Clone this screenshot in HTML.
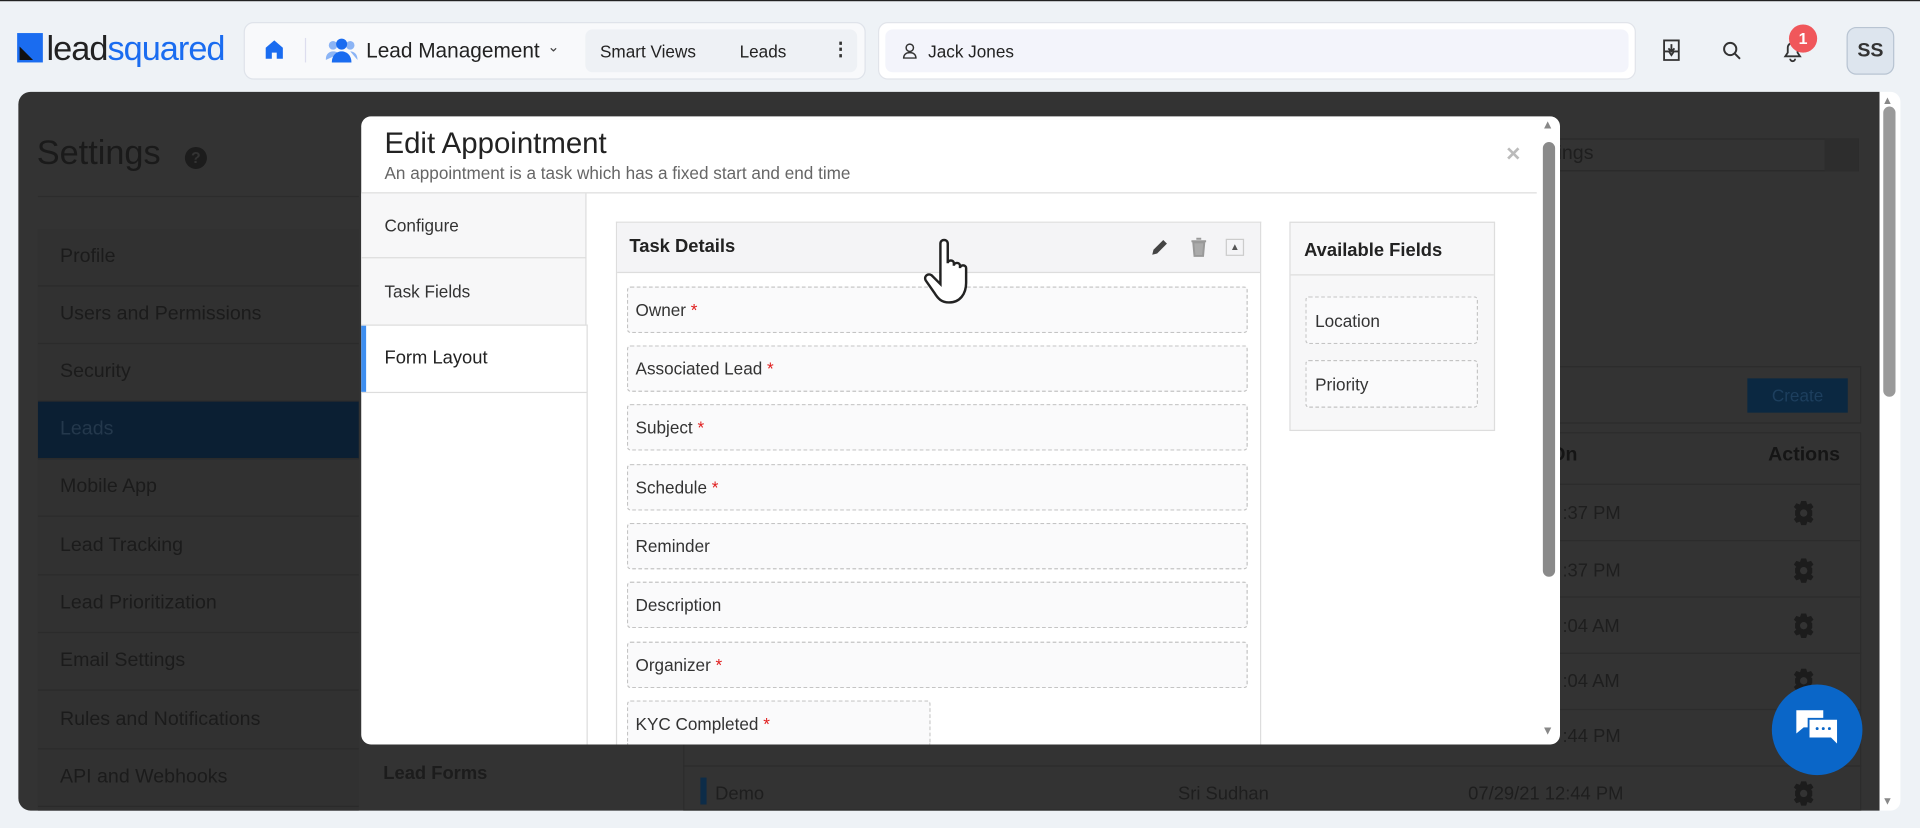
<!DOCTYPE html>
<html><head><meta charset="utf-8"><style>
*{box-sizing:border-box;margin:0;padding:0}
html,body{width:1920px;height:828px;overflow:hidden;background:#eef2f6;font-family:"Liberation Sans",sans-serif}
#w{width:1568px;height:676px;transform:scale(1.22449);transform-origin:0 0;position:relative;background:#eef2f6;border-top:1px solid #222}
.a{position:absolute}
.t{position:absolute;white-space:nowrap}
.fld{position:absolute;left:512px;width:507px;height:38px;border:1px dashed #c4c4c4;border-radius:3px;background:#fafafb;font-size:14px;color:#333;padding:10px 6px}
.fld b{color:#e02020;font-weight:normal}
.nav{position:absolute;left:31px;width:262px;height:47px;border-bottom:1px solid #2b2b2b;font-size:16px;color:#1b1b1b;padding:14px 18px}
.row{position:absolute;left:558px;width:962px;height:46px;border-bottom:1px solid #2c2c2c}
.gear{position:absolute;left:1463px;width:20px;height:20px}
</style></head><body><div id="w">
<div class="a" style="left:14px;top:26px;width:21px;height:24px;background:#1a6cf0"></div>
<div class="a" style="left:16px;top:37px;width:0;height:0;border-left:11px solid #111;border-top:11px solid transparent"></div>
<div class="t" style="left:38px;top:23px;font-size:28px;letter-spacing:-0.8px;color:#222">lead<span style="color:#1a6cf0">squared</span></div>
<div class="a" style="left:199px;top:17px;width:508px;height:47px;background:#f8f9fb;border:1px solid #dfe3ea;border-radius:8px"></div>
<svg class="a" style="left:216px;top:31px" width="16" height="17" viewBox="0 0 16 17"><path d="M1 7L8 1l7 6v9H10v-5H6v5H1z" fill="#1a6cf0"/></svg>
<div class="a" style="left:249px;top:30px;width:1px;height:20px;background:#dde"></div>
<svg class="a" style="left:266px;top:30px" width="26" height="20" viewBox="0 0 26 20"><circle cx="6" cy="6" r="3.5" fill="#8bb4f5"/><circle cx="20" cy="6" r="3.5" fill="#8bb4f5"/><circle cx="13" cy="5" r="4.5" fill="#1a6cf0"/><path d="M0 18c0-5 3-7 6-7s4 1 5 2M26 18c0-5-3-7-6-7" fill="#8bb4f5"/><path d="M5 20c0-6 4-9 8-9s8 3 8 9z" fill="#1a6cf0"/></svg>
<div class="t" style="left:299px;top:31px;font-size:17px;color:#222">Lead Management</div>
<div class="t" style="left:447px;top:30px;font-size:12px;color:#444">&#8964;</div>
<div class="a" style="left:478px;top:23px;width:222px;height:35px;background:#eef1f5;border-radius:6px"></div>
<div class="t" style="left:490px;top:33px;font-size:14px;color:#222">Smart Views</div>
<div class="t" style="left:604px;top:33px;font-size:14px;color:#222">Leads</div>
<div class="t" style="left:679px;top:30px;font-size:15px;font-weight:bold;color:#333">&#8942;</div>
<div class="a" style="left:717px;top:17px;width:619px;height:47px;background:#fff;border:1px solid #e1e4ea;border-radius:8px"></div>
<div class="a" style="left:723px;top:23px;width:607px;height:35px;background:#f3f4fb;border-radius:6px"></div>
<svg class="a" style="left:737px;top:34px" width="12" height="13" viewBox="0 0 12 13"><circle cx="6" cy="4" r="3" fill="none" stroke="#333" stroke-width="1.2"/><path d="M1 12.5c0-3 2-4.5 5-4.5s5 1.5 5 4.5z" fill="none" stroke="#333" stroke-width="1.2"/></svg>
<div class="t" style="left:758px;top:33px;font-size:14px;color:#222">Jack Jones</div>
<svg class="a" style="left:1355px;top:30px" width="20" height="20" viewBox="0 0 20 20"><path d="M4 2h12v16H4zM4 11h4l2 3 2-3h4M10 5v6M7.5 8.5L10 11l2.5-2.5" fill="none" stroke="#333" stroke-width="1.5"/></svg>
<svg class="a" style="left:1406px;top:32px" width="16" height="16" viewBox="0 0 16 16"><circle cx="7" cy="7" r="5" fill="none" stroke="#333" stroke-width="1.6"/><path d="M11 11l4 4" stroke="#333" stroke-width="1.6"/></svg>
<svg class="a" style="left:1454px;top:30px" width="20" height="20" viewBox="0 0 20 20"><path d="M4 15h12l-2-3V8a4 4 0 0 0-8 0v4zM8 17a2 2 0 0 0 4 0" fill="none" stroke="#333" stroke-width="1.5"/></svg>
<div class="a" style="left:1461px;top:19px;width:23px;height:23px;border-radius:50%;background:#f0575b;color:#fff;font-size:13px;font-weight:bold;text-align:center;line-height:23px">1</div>
<div class="a" style="left:1508px;top:21px;width:39px;height:39px;border-radius:8px;background:#dde5ee;border:1px solid #b8c4d2;font-size:16px;color:#333;text-align:center;line-height:37px;font-weight:bold">SS</div>
<div class="a" style="left:15px;top:74px;width:1520px;height:587px;background:#333;border-radius:10px 0 0 10px"></div>
<div class="a" style="left:1535px;top:74px;width:17px;height:587px;background:#fff;border-radius:0 8px 8px 0"></div>
<div class="a" style="left:1538px;top:86px;width:10px;height:237px;background:#9a9a9a;border-radius:5px"></div>
<div class="t" style="left:1537px;top:76px;font-size:9px;color:#888">&#9650;</div>
<div class="t" style="left:1537px;top:648px;font-size:9px;color:#888">&#9660;</div>
<div class="t" style="left:30px;top:108px;font-size:28px;color:#1a1a1a">Settings</div>
<div class="a" style="left:151px;top:119px;width:18px;height:18px;border-radius:50%;background:#1c1c1c;color:#333;font-size:13px;font-weight:bold;text-align:center;line-height:18px">?</div>
<div class="a" style="left:31px;top:159px;width:262px;height:1px;background:#2c2c2c"></div>
<div class="a" style="left:31px;top:186px;width:262px;height:475px;background:#313131"></div>
<div class="nav" style="top:186px">Profile</div>
<div class="nav" style="top:233px">Users and Permissions</div>
<div class="nav" style="top:280px">Security</div>
<div class="nav" style="top:327px;background:#0b1f33;color:#24384c">Leads</div>
<div class="nav" style="top:374px">Mobile App</div>
<div class="nav" style="top:422px">Lead Tracking</div>
<div class="nav" style="top:469px">Lead Prioritization</div>
<div class="nav" style="top:516px">Email Settings</div>
<div class="nav" style="top:564px">Rules and Notifications</div>
<div class="nav" style="top:611px">API and Webhooks</div>
<div class="t" style="left:313px;top:622px;font-size:15px;font-weight:bold;color:#1c1c1c">Lead Forms</div>
<div class="a" style="left:1270px;top:112px;width:248px;height:27px;border:1px solid #2a2a2a"></div>
<div class="t" style="left:1272px;top:116px;font-size:16px;color:#1e1e1e">ings</div>
<div class="a" style="left:1490px;top:112px;width:28px;height:27px;background:#2d2d2d"></div>
<div class="a" style="left:558px;top:298px;width:962px;height:47px;border:1px solid #2c2c2c"></div>
<div class="a" style="left:1427px;top:308px;width:82px;height:28px;background:#0b2841;color:#1d3f5e;font-size:14px;text-align:center;line-height:28px">Create</div>
<div class="a" style="left:558px;top:352px;width:962px;height:309px;border:1px solid #2c2c2c"></div>
<div class="t" style="left:1266px;top:362px;font-size:16px;font-weight:bold;color:#151515">On</div>
<div class="t" style="left:1444px;top:362px;font-size:16px;font-weight:bold;color:#151515">Actions</div>
<div class="row" style="top:349px;height:46px"></div>
<div class="row" style="top:395px"></div><div class="row" style="top:441px"></div><div class="row" style="top:487px"></div><div class="row" style="top:533px"></div><div class="row" style="top:579px"></div>
<div class="t" style="left:1276px;top:410px;font-size:15px;color:#1e1e1e">:37 PM</div>
<div class="t" style="left:1276px;top:457px;font-size:15px;color:#1e1e1e">:37 PM</div>
<div class="t" style="left:1276px;top:502px;font-size:15px;color:#1e1e1e">:04 AM</div>
<div class="t" style="left:1276px;top:547px;font-size:15px;color:#1e1e1e">:04 AM</div>
<div class="t" style="left:1276px;top:592px;font-size:15px;color:#1e1e1e">:44 PM</div>
<svg class="gear" style="top:408px" viewBox="0 0 20 20"><path d="M8 0h4l1 3 3-1 2 3-2 2 1 1v4l-1 1 2 2-2 3-3-1-1 3H8l-1-3-3 1-2-3 2-2-1-1V8l1-1-2-2 2-3 3 1z" fill="#1c1c1c"/><circle cx="10" cy="10" r="3" fill="#333"/></svg>
<svg class="gear" style="top:455px" viewBox="0 0 20 20"><path d="M8 0h4l1 3 3-1 2 3-2 2 1 1v4l-1 1 2 2-2 3-3-1-1 3H8l-1-3-3 1-2-3 2-2-1-1V8l1-1-2-2 2-3 3 1z" fill="#1c1c1c"/><circle cx="10" cy="10" r="3" fill="#333"/></svg>
<svg class="gear" style="top:500px" viewBox="0 0 20 20"><path d="M8 0h4l1 3 3-1 2 3-2 2 1 1v4l-1 1 2 2-2 3-3-1-1 3H8l-1-3-3 1-2-3 2-2-1-1V8l1-1-2-2 2-3 3 1z" fill="#1c1c1c"/><circle cx="10" cy="10" r="3" fill="#333"/></svg>
<svg class="gear" style="top:545px" viewBox="0 0 20 20"><path d="M8 0h4l1 3 3-1 2 3-2 2 1 1v4l-1 1 2 2-2 3-3-1-1 3H8l-1-3-3 1-2-3 2-2-1-1V8l1-1-2-2 2-3 3 1z" fill="#1c1c1c"/><circle cx="10" cy="10" r="3" fill="#333"/></svg>
<svg class="gear" style="top:637px" viewBox="0 0 20 20"><path d="M8 0h4l1 3 3-1 2 3-2 2 1 1v4l-1 1 2 2-2 3-3-1-1 3H8l-1-3-3 1-2-3 2-2-1-1V8l1-1-2-2 2-3 3 1z" fill="#1c1c1c"/><circle cx="10" cy="10" r="3" fill="#333"/></svg>
<div class="a" style="left:572px;top:634px;width:5px;height:22px;background:#0d2c48"></div>
<div class="t" style="left:584px;top:639px;font-size:15px;color:#1e1e1e">Demo</div>
<div class="t" style="left:962px;top:639px;font-size:15px;color:#1e1e1e">Sri Sudhan</div>
<div class="t" style="left:1199px;top:639px;font-size:15px;color:#1e1e1e">07/29/21 12:44 PM</div>
<div class="a" style="left:295px;top:94px;width:979px;height:513px;background:#fff;border-radius:8px;overflow:hidden"></div>
<div class="t" style="left:314px;top:103px;font-size:24px;color:#222">Edit Appointment</div>
<div class="t" style="left:314px;top:132px;font-size:14px;color:#666">An appointment is a task which has a fixed start and end time</div>
<div class="t" style="left:1230px;top:114px;font-size:20px;color:#bbb;font-weight:bold">&#215;</div>
<div class="a" style="left:295px;top:156px;width:960px;height:1px;background:#ddd"></div>
<div class="a" style="left:1260px;top:115px;width:10px;height:355px;background:#8a8a8a;border-radius:5px"></div>
<div class="t" style="left:1259px;top:96px;font-size:10px;color:#888">&#9650;</div>
<div class="t" style="left:1259px;top:591px;font-size:10px;color:#888">&#9660;</div>
<div class="a" style="left:295px;top:157px;width:184px;height:107px;background:#f7f7f8;border-right:1px solid #ddd"></div>
<div class="a" style="left:295px;top:209px;width:184px;height:1px;background:#ddd"></div>
<div class="a" style="left:295px;top:264px;width:184px;height:1px;background:#ddd"></div>
<div class="a" style="left:295px;top:319px;width:184px;height:1px;background:#ddd"></div>
<div class="a" style="left:479px;top:264px;width:1px;height:343px;background:#ddd"></div>
<div class="a" style="left:295px;top:265px;width:4px;height:54px;background:#3d8ef0"></div>
<div class="t" style="left:314px;top:175px;font-size:14px;color:#333">Configure</div>
<div class="t" style="left:314px;top:229px;font-size:14px;color:#333">Task Fields</div>
<div class="t" style="left:314px;top:283px;font-size:15px;color:#222">Form Layout</div>
<div class="a" style="left:503px;top:180px;width:527px;height:427px;border:1px solid #ddd;border-bottom:none"></div>
<div class="a" style="left:504px;top:181px;width:525px;height:41px;background:#f4f4f6;border-bottom:1px solid #ddd"></div>
<div class="t" style="left:514px;top:192px;font-size:15px;font-weight:bold;color:#222">Task Details</div>
<svg class="a" style="left:939px;top:193px" width="16" height="16" viewBox="0 0 16 16"><path d="M2 14l1-4 8-8 3 3-8 8z" fill="#444"/></svg>
<svg class="a" style="left:972px;top:193px" width="14" height="16" viewBox="0 0 14 16"><path d="M1 3h12M5 1h4M2.5 4h9l-1 11h-7z" stroke="#999" stroke-width="1.6" fill="#aaa"/></svg>
<div class="a" style="left:1001px;top:194px;width:15px;height:14px;border:1px solid #ccc;font-size:8px;color:#555;text-align:center;line-height:12px">&#9650;</div>
<div class="fld" style="top:233px">Owner <b>*</b></div>
<div class="fld" style="top:281px">Associated Lead <b>*</b></div>
<div class="fld" style="top:329px">Subject <b>*</b></div>
<div class="fld" style="top:378px">Schedule <b>*</b></div>
<div class="fld" style="top:426px">Reminder</div>
<div class="fld" style="top:474px">Description</div>
<div class="fld" style="top:523px">Organizer <b>*</b></div>
<div class="fld" style="top:571px;width:248px;height:36px;border-bottom:none;border-radius:3px 3px 0 0">KYC Completed <b>*</b></div>
<div class="a" style="left:1053px;top:180px;width:168px;height:171px;border:1px solid #ddd;background:#f7f7f8"></div>
<div class="a" style="left:1054px;top:223px;width:166px;height:1px;background:#ddd"></div>
<div class="t" style="left:1065px;top:195px;font-size:15px;font-weight:bold;color:#222">Available Fields</div>
<div class="a" style="left:1066px;top:241px;width:141px;height:39px;border:1px dashed #c4c4c4;border-radius:3px;background:#fafafb;font-size:14px;color:#333;padding:11px 7px">Location</div>
<div class="a" style="left:1066px;top:293px;width:141px;height:39px;border:1px dashed #c4c4c4;border-radius:3px;background:#fafafb;font-size:14px;color:#333;padding:11px 7px">Priority</div>
<svg class="a" style="left:752px;top:192px" width="50" height="60" viewBox="0 0 50 60"><path d="M16 6c0-4 6-4 6 0v16c0-3 5-3 5 0v2c0-3 5-3 5 0v2c0-3 5-3 5 0v12c0 9-5 16-14 16c-6 0-9-3-12-8L4 36c-2-4 3-7 6-3l6 6z" fill="#fff" stroke="#222" stroke-width="2"/></svg>
<div class="a" style="left:1447px;top:558px;width:74px;height:74px;border-radius:50%;background:#0a66c8"></div>
<svg class="a" style="left:1465px;top:577px" width="40" height="36" viewBox="0 0 40 36"><path d="M2 2h22v14H8l-6 5z" fill="#fff"/><path d="M12 9h24v16l0 6-6-6H12z" fill="#fff" stroke="#0a66c8" stroke-width="1.5"/><circle cx="19" cy="17" r="1.2" fill="#0a66c8"/><circle cx="24" cy="17" r="1.2" fill="#0a66c8"/><circle cx="29" cy="17" r="1.2" fill="#0a66c8"/></svg>
</div></body></html>
